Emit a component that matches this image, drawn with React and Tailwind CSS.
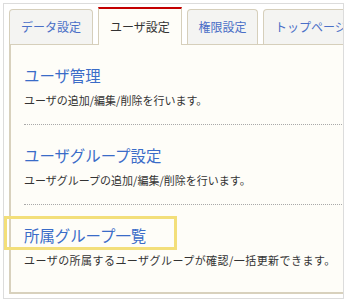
export default function App() {
  const font = { fontFamily: '"Noto Sans CJK JP", "Noto Sans", sans-serif' };
  const sections = [
    { title: "ユーザ管理", desc: "ユーザの追加/編集/削除を行います。", track: "" },
    { title: "ユーザグループ設定", desc: "ユーザグループの追加/編集/削除を行います。", track: "" },
    { title: "所属グループ一覧", desc: "ユーザの所属するユーザグループが確認/一括更新できます。", track: "tracking-[0.45px]" },
  ];
  return (
    <div className="w-[350px] h-[303px] bg-white pt-[3px] pl-[3px]" style={font}>
      <div className="relative w-[341px] h-[296px] border border-[#dcdcdc] overflow-hidden pt-[3px] pl-[5px] pb-[4px]">
        <div className="flex items-end gap-[5px] h-[37px] whitespace-nowrap">
          <div className="shrink-0 w-[84px] h-[35px] flex items-center justify-center border border-b-0 border-[#d6cfbb] rounded-t-[4px] bg-[#f4f4f2] text-[12px] text-[#4a6fc7]">
            データ設定
          </div>
          <div className="relative z-10 shrink-0 w-[84px] h-[38px] -mb-px flex items-center justify-center border-x border-[#d6cfbb] border-t-2 border-t-[#c40000] bg-[#fefdf8] text-[12px] text-[#333]">
            ユーザ設定
          </div>
          <div className="shrink-0 w-[71px] h-[35px] flex items-center justify-center border border-b-0 border-[#d6cfbb] rounded-t-[4px] bg-[#f4f4f2] text-[12px] text-[#4a6fc7]">
            権限設定
          </div>
          <div className="shrink-0 h-[35px] flex items-center px-[11px] border border-b-0 border-[#d6cfbb] rounded-t-[4px] bg-[#f4f4f2] text-[12px] text-[#4a6fc7]">
            トップページ設定
          </div>
        </div>
        <div className="w-[345px] h-[250px] bg-[#fefdf8] border-t border-t-[#d6cfbb] border-l-2 border-b-2 border-[#d8d1bd]">
          {sections.map((s, i) => (
            <div
              key={i}
              className={
                "ml-[13px] pt-[20px] " +
                (i < 2 ? "pb-[16px] border-b border-dotted border-[#a9a9a9]" : "")
              }
            >
              <div className="text-[15.4px] leading-[20px] text-[#3a6cc8]">{s.title}</div>
              <div className={"mt-[7px] text-[11px] leading-[16px] text-[#333] " + s.track}>{s.desc}</div>
            </div>
          ))}
        </div>
        <div className="absolute left-0 top-[212px] w-[173px] h-[34px] border-[3px] border-[#f3df7a]" />
      </div>
    </div>
  );
}
